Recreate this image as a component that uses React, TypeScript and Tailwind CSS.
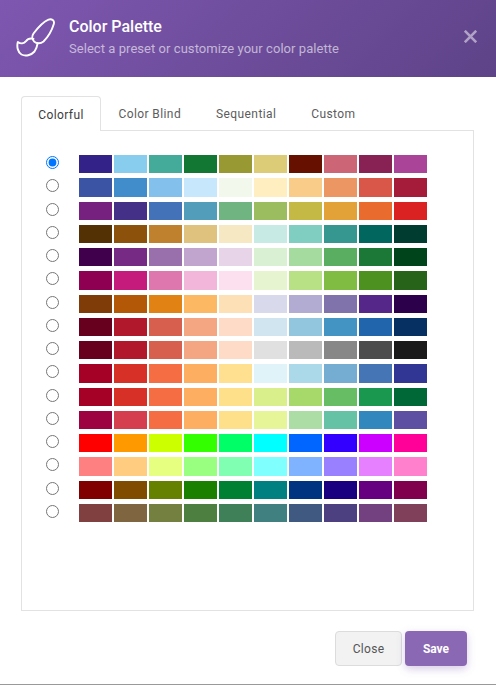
const palettes = [
  ['#332288', '#88ccee', '#44aa99', '#117733', '#999933', '#ddcc77', '#661100', '#cc6677', '#882255', '#aa4499'],
  ['#3b54a4', '#418dcb', '#84c0ec', '#c7e7fc', '#f2f8ec', '#feeec0', '#f9cc8a', '#ec9664', '#d85749', '#a51c3a'],
  ['#762180', '#453088', '#4372b8', '#529dba', '#70b482', '#9cbd5f', '#c5b945', '#e2a238', '#e96b2d', '#da2222'],
  ['#543005', '#8c510a', '#bf812d', '#dfc27d', '#f6e8c3', '#c7eae5', '#80cdc1', '#35978f', '#01665e', '#003c30'],
  ['#40004b', '#762a83', '#9970ab', '#c2a5cf', '#e7d4e8', '#d9f0d3', '#a6dba0', '#5aae61', '#1b7837', '#00441b'],
  ['#8e0152', '#c51b7d', '#de77ae', '#f1b6da', '#fde0ef', '#e6f5d0', '#b8e186', '#7fbc41', '#4d9221', '#276419'],
  ['#7f3b08', '#b35806', '#e08214', '#fdb863', '#fee0b6', '#d8daeb', '#b2abd2', '#8073ac', '#542788', '#2d004b'],
  ['#67001f', '#b2182b', '#d6604d', '#f4a582', '#fddbc7', '#d1e5f0', '#92c5de', '#4393c3', '#2166ac', '#053061'],
  ['#67001f', '#b2182b', '#d6604d', '#f4a582', '#fddbc7', '#e0e0e0', '#bababa', '#878787', '#4d4d4d', '#1a1a1a'],
  ['#a50026', '#d73027', '#f46d43', '#fdae61', '#fee090', '#e0f3f8', '#abd9e9', '#74add1', '#4575b4', '#313695'],
  ['#a50026', '#d73027', '#f46d43', '#fdae61', '#fee08b', '#d9ef8b', '#a6d96a', '#66bd63', '#1a9850', '#006837'],
  ['#9e0142', '#d53e4f', '#f46d43', '#fdae61', '#fee08b', '#e6f598', '#abdda4', '#66c2a5', '#3288bd', '#5e4fa2'],
  ['#ff0000', '#ff9900', '#ccff00', '#33ff00', '#00ff66', '#00ffff', '#0066ff', '#3300ff', '#cc00ff', '#ff0099'],
  ['#ff8080', '#ffcc80', '#e6ff80', '#99ff80', '#80ffb3', '#80ffff', '#80b3ff', '#9980ff', '#e680ff', '#ff80cc'],
  ['#800000', '#804d00', '#668000', '#1a8000', '#008033', '#008080', '#003380', '#1a0080', '#660080', '#80004d'],
  ['#804040', '#806640', '#738040', '#4d8040', '#408059', '#408080', '#405980', '#4d4080', '#734080', '#804059'],
]

const tabs = ['Colorful', 'Color Blind', 'Sequential', 'Custom']

function BrushIcon() {
  return (
    <svg viewBox="16 18 40 41" className="w-[40px] h-[41px] shrink-0" fill="none" stroke="white" strokeWidth="1.9" strokeLinejoin="round" strokeLinecap="round">
      <path d="M33.5 33.5C38 27.5 44 21.5 48.5 19.6C51.8 18.4 54.8 20.5 53.8 24C52 30 47.5 37.5 43.5 41.5C40.5 44 36.5 43.8 34.2 41.6C32 39.5 31.8 36 33.5 33.5Z" />
      <path d="M33.5 38.8C30.5 38 27.5 39 26 41.2C24 43.8 20.5 44 17.8 42C16.5 47 18 52.5 21.5 54.5C25.5 56.5 31 55.5 34.5 51.5C36 49.5 37.2 46.5 37.6 43.2" />
    </svg>
  )
}

export default function App() {
  return (
    <div className="h-[685px] w-[496px] bg-white border-b border-[#999] font-['Roboto',sans-serif] flex flex-col">
      <header className="h-[77px] shrink-0 flex items-center pl-[16px] pr-[19px] bg-[linear-gradient(135deg,#7e57b0,#5e4388)]">
        <BrushIcon />
        <div className="ml-[13px] flex-1 mb-[2px]">
          <h1 className="text-[16px] leading-[20px] font-medium text-white">Color Palette</h1>
          <p className="mt-[3px] text-[13px] leading-[18px] tracking-[0.05px] text-white/60">Select a preset or customize your color palette</p>
        </div>
        <svg viewBox="0 0 13 13" className="w-[13px] h-[13px] mb-[4px]" stroke="white" strokeOpacity="0.5" strokeWidth="2.6">
          <path d="M0.8 0.8L12.2 12.2M12.2 0.8L0.8 12.2" />
        </svg>
      </header>

      <main className="flex-1 flex flex-col px-[21px] pt-[19px]">
        <div className="flex h-[34px] text-[12px] tracking-[0.4px] text-[#5c5c5c]">
          {tabs.map((tab, i) => (
            <div
              key={tab}
              className={
                i === 0
                  ? 'w-[80px] flex items-center justify-center pt-[1px] bg-white border border-b-0 border-[#e2e2e2] rounded-t text-[#3c3c3c] relative z-10 h-[35px]'
                  : 'px-[17.5px] pt-[1px] flex items-center'
              }
            >
              {tab}
            </div>
          ))}
        </div>
        <div className="h-[481px] w-[453px] border border-[#e2e2e2] pt-[24px] pl-[24px]">
          <div className="flex flex-col gap-[5px]">
            {palettes.map((colors, i) => (
              <label key={i} className="flex items-start h-[18.27px]">
                <input type="radio" name="palette" defaultChecked={i === 0} className="w-[13px] h-[13px] m-0 mt-[1px] shrink-0" />
                <div className="ml-[20px] flex gap-[2px]">
                  {colors.map((color, j) => (
                    <div key={j} className="w-[33px] h-[18.27px]" style={{ backgroundColor: color }} />
                  ))}
                </div>
              </label>
            ))}
          </div>
        </div>
        <div className="flex justify-end gap-[3px] mt-[20px] pr-[8px]">
          <button className="w-[67px] h-[35px] rounded border border-[#dcdcdc] bg-[#f2f2f2] text-[12px] tracking-[0.3px] text-[#555]">Close</button>
          <button className="w-[62px] h-[35px] rounded bg-[#8a68b4] text-[12px] font-bold text-white shadow-[0_3px_8px_rgba(126,87,176,0.3)]">Save</button>
        </div>
      </main>
    </div>
  )
}
